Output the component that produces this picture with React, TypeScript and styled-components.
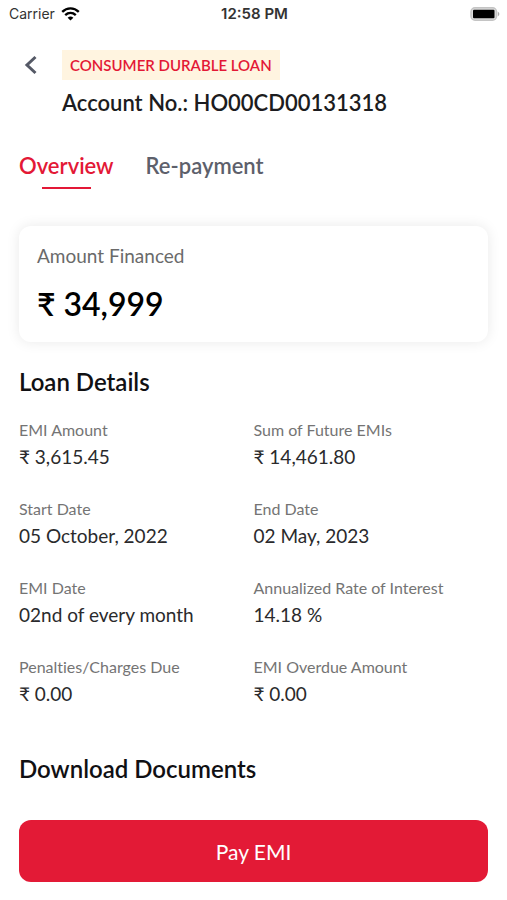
import React from "react";
import styled, { createGlobalStyle } from "styled-components";

const GlobalStyle = createGlobalStyle`
  *, *::before, *::after { box-sizing: border-box; }
  body {
    margin: 0;
    background: #fff;
    color: #1c1c20;
    font-family: Lato, "Noto Sans", sans-serif;
    font-variant-ligatures: none;
  }
  button { font: inherit; border: 0; padding: 0; background: none; cursor: pointer; }
  h1, h2, p, dl, dt, dd { margin: 0; }
`;

const Screen = styled.div`
  display: flex;
  flex-direction: column;
  min-height: 100vh;
`;

const StatusBar = styled.header`
  display: grid;
  grid-template-columns: 1fr auto 1fr;
  align-items: center;
  height: 27px;
  padding: 0 7px 0 9px;
  font: 14px/20px Inter, sans-serif;
  color: #333;
`;

const Carrier = styled.span`
  display: flex;
  align-items: center;
  gap: 6px;
`;

const Clock = styled.time`
  font-size: 15px;
  font-weight: 600;
`;

const BatteryIcon = styled.svg`
  justify-self: end;
`;

const AccountHeader = styled.div`
  display: grid;
  grid-template-columns: 43px 1fr;
  align-items: center;
  padding: 23px 19px 0;
  row-gap: 8px;
`;

const BackButton = styled.button`
  display: flex;
  width: 24px;
  height: 30px;
  align-items: center;
`;

const Tag = styled.span`
  justify-self: start;
  padding: 0 8px;
  background: #fff4e0;
  color: #e31836;
  font-size: 15px;
  font-weight: 600;
  line-height: 30px;
`;

const AccountNumber = styled.h1`
  grid-column: 2;
  font-size: 22px;
  line-height: 30px;
  font-weight: 600;
`;

const Tabs = styled.nav`
  display: flex;
  gap: 32px;
  padding: 30px 19px 0;
`;

const Tab = styled.button<{ $active?: boolean }>`
  display: flex;
  flex-direction: column;
  align-items: center;
  color: ${(p) => (p.$active ? "#e31836" : "#5d606b")};
  font-size: 22px;
  font-weight: 600;
  line-height: 36px;

  &::after {
    content: "";
    width: 49px;
    height: 2px;
    margin-top: 3px;
    background: ${(p) => (p.$active ? "#e31836" : "transparent")};
  }
`;

const AmountCard = styled.section`
  margin: 37px 19px 0;
  padding: 16px 18px;
  border-radius: 12px;
  box-shadow: 0 0 14px rgba(0, 0, 0, 0.09);
`;

const CardLabel = styled.p`
  color: #6a6a6a;
  font-size: 19px;
  line-height: 28px;
`;

const CardAmount = styled.p`
  margin-top: 12px;
  color: #000;
  font-size: 32px;
  font-weight: 600;
  line-height: 44px;
`;

const Section = styled.section`
  padding: 24px 19px 0;
`;

const SectionTitle = styled.h2`
  color: #101013;
  font-size: 24px;
  line-height: 32px;
  font-weight: 600;
`;

const Details = styled.dl`
  display: grid;
  grid-template-columns: 1fr 1fr;
  row-gap: 25px;
  margin-top: 19px;
`;

const Label = styled.dt`
  color: #747474;
  font-size: 16px;
  line-height: 26px;
`;

const Value = styled.dd`
  color: #2a2a2c;
  font-size: 19px;
  line-height: 28px;
`;

const Documents = styled(Section)`
  padding-top: 45px;
`;

const Footer = styled.footer`
  padding: 35px 19px 19px;
`;

const PayButton = styled.button`
  width: 100%;
  height: 62px;
  border-radius: 12px;
  background: #e31a36;
  color: #fff;
  font-size: 21px;
`;

const details = [
  ["EMI Amount", "₹ 3,615.45"],
  ["Sum of Future EMIs", "₹ 14,461.80"],
  ["Start Date", "05 October, 2022"],
  ["End Date", "02 May, 2023"],
  ["EMI Date", "02nd of every month"],
  ["Annualized Rate of Interest", "14.18 %"],
  ["Penalties/Charges Due", "₹ 0.00"],
  ["EMI Overdue Amount", "₹ 0.00"],
];

export default function App() {
  return (
    <Screen>
      <GlobalStyle />
      <StatusBar>
        <Carrier>
          Carrier
          <svg width="19" height="14" viewBox="0 0 19 14" fill="none" stroke="#000" strokeWidth="2.4" aria-label="Wi-Fi">
            <path d="M1.200 4.800C6 .2 13 .2 17.800 4.800M4.200 8.200C7.400 5.300 11.600 5.300 14.800 8.200" />
            <path d="M9.5 13.6 6.6 10.7Q9.5 8.3 12.4 10.7Z" fill="#000" stroke="none" />
          </svg>
        </Carrier>
        <Clock>12:58 PM</Clock>
        <BatteryIcon width="30" height="14" viewBox="0 0 30 14" aria-label="Battery">
          <rect x="1" y="0.75" width="25.5" height="12.5" rx="4" fill="#ddd" stroke="#c4c4c4" strokeWidth="1.5" />
          <rect x="3" y="2.8" width="21.5" height="8.400" rx="1" />
          <path d="M27.800 4.500Q31 7 27.800 9.500Z" fill="#aaa" />
        </BatteryIcon>
      </StatusBar>
      <AccountHeader>
        <BackButton aria-label="Back">
          <svg width="24" height="24" viewBox="0 0 24 24" fill="none" stroke="#555966" strokeWidth="3">
            <path d="M16.5 4 8 12l8.500 8" />
          </svg>
        </BackButton>
        <Tag>CONSUMER DURABLE LOAN</Tag>
        <AccountNumber>Account No.: HO00CD00131318</AccountNumber>
      </AccountHeader>
      <Tabs>
        <Tab $active aria-current="page">Overview</Tab>
        <Tab>Re-payment</Tab>
      </Tabs>
      <AmountCard>
        <CardLabel>Amount Financed</CardLabel>
        <CardAmount>₹ 34,999</CardAmount>
      </AmountCard>
      <Section>
        <SectionTitle>Loan Details</SectionTitle>
        <Details>
          {details.map(([label, value]) => (
            <div key={label}>
              <Label>{label}</Label>
              <Value>{value}</Value>
            </div>
          ))}
        </Details>
      </Section>
      <Documents>
        <SectionTitle>Download Documents</SectionTitle>
      </Documents>
      <Footer>
        <PayButton>Pay EMI</PayButton>
      </Footer>
    </Screen>
  );
}
